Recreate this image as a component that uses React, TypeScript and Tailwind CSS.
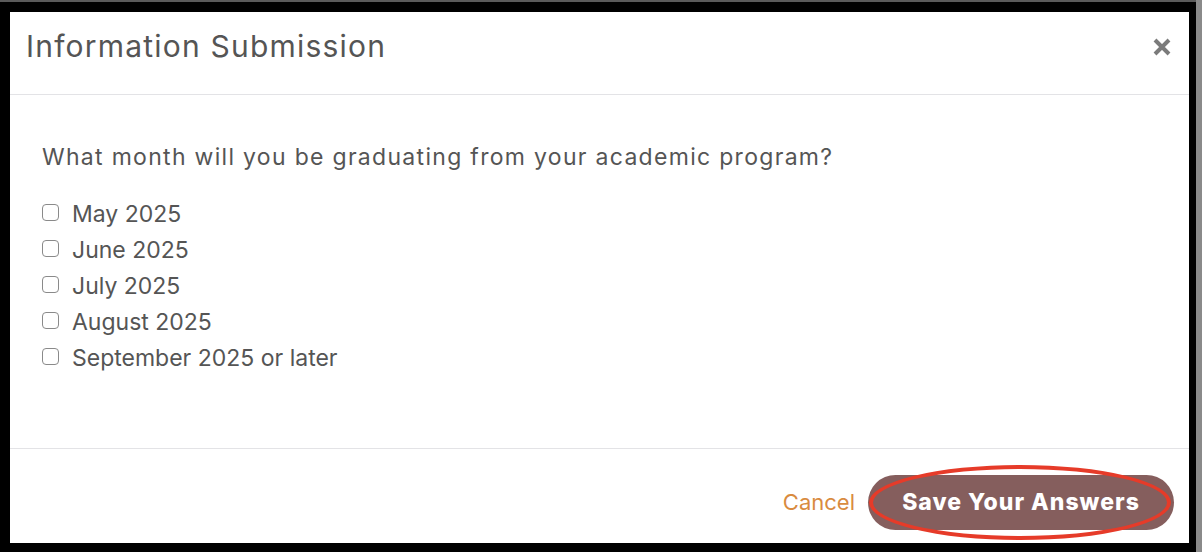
import React from "react";

const options = ["May 2025", "June 2025", "July 2025", "August 2025", "September 2025 or later"];

export default function App() {
  return (
    <div className="w-[1202px] h-[552px] bg-black relative overflow-hidden">
      <div className="absolute left-0 top-0 w-full h-[2px] bg-[#5a5a5a]" />
      <div className="absolute right-0 top-0 w-[6px] h-full bg-[#8a8a8a]" />
      <div className="pt-[12px] pl-[10px]">
        <div className="w-[1179px] h-[531px] bg-white flex flex-col">
          <div className="h-[83px] flex items-start justify-between pl-[16px] pr-[17px] pt-[15px] border-b border-[#e3e3e6] shrink-0">
            <h1 className="text-[30px] leading-[38px] text-[#555] tracking-[1.2px]" style={{ fontFamily: "Inter, 'Noto Sans', sans-serif" }}>
              Information Submission
            </h1>
            <svg width="20" height="20" viewBox="0 0 20 20" className="mt-[10px]">
              <path d="M3 3 L17 17 M17 3 L3 17" stroke="#7b7b7b" strokeWidth="4" strokeLinecap="butt" />
            </svg>
          </div>
          <div className="flex-1 pl-[32px] pt-[47px]" style={{ fontFamily: "Inter, 'Noto Sans', sans-serif" }}>
            <p className="text-[23px] text-[#555] leading-[30px] tracking-[1.3px]">
              What month will you be graduating from your academic program?
            </p>
            <div className="mt-[24px] flex flex-col">
              {options.map((o) => (
                <label key={o} className="flex items-center h-[36px] gap-[13px] text-[23px] text-[#555]">
                  <span className="w-[17px] h-[17px] rounded-[4px] border border-[#8a8a8a] bg-white shrink-0 -mt-[4px]" />
                  <span>{o}</span>
                </label>
              ))}
            </div>
          </div>
          <div className="h-[95px] border-t border-[#e3e3e6] flex items-center justify-end pr-[15px] gap-[13px] shrink-0" style={{ fontFamily: "Inter, 'Noto Sans', sans-serif" }}>
            <span className="text-[22px] text-[#d98b3f] mt-[12px]">Cancel</span>
            <div className="relative mt-[12px]">
              <button className="h-[55px] w-[306px] rounded-full bg-[#855e5d] text-white text-[23px] font-extrabold tracking-[1px]">
                Save Your Answers
              </button>
              <div className="absolute left-[1px] top-[-10px] w-[302px] h-[75px] rounded-[50%] border-[4px] border-[#e63b29]" />
            </div>
          </div>
        </div>
      </div>
    </div>
  );
}
